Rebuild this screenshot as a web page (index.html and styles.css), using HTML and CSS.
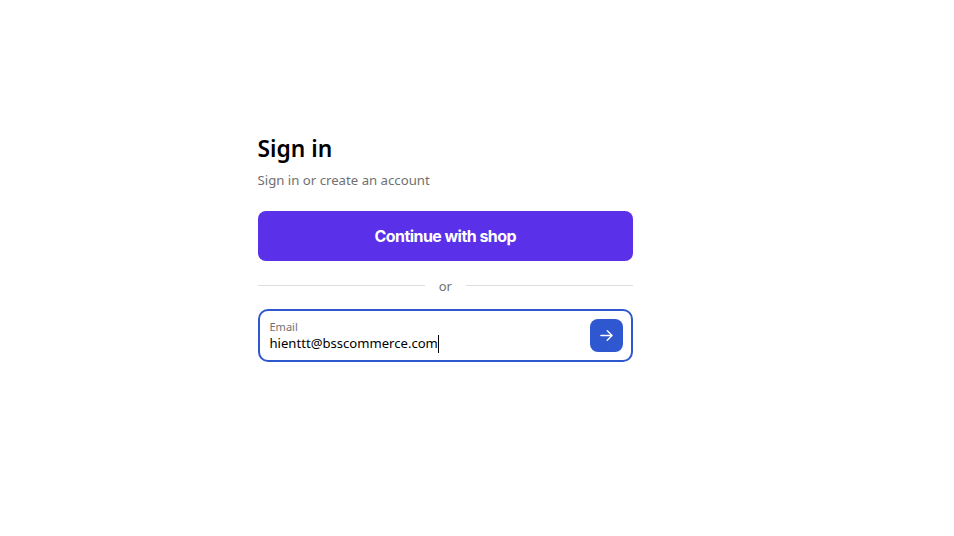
FILE: index.html
```html
<!DOCTYPE html>
<html lang="en">

<head>
    <meta charset="UTF-8">
    <meta name="viewport" content="width=device-width, initial-scale=1.0">
    <title>Sign in</title>
    <link rel="stylesheet" href="styles.css">
</head>

<body>
    <div class="container">
        <h1>Sign in</h1>
        <p class="subtitle">Sign in or create an account</p>
        <button class="shop-btn">Continue with shop</button>
        <div class="divider">
            <span class="line"></span>
            <span class="or">or</span>
            <span class="line"></span>
        </div>
        <div class="email-field">
            <div class="email-text">
                <label class="email-label">Email</label>
                <div class="email-value">hienttt@bsscommerce.com<span class="caret"></span></div>
            </div>
            <button class="submit-btn">
                <svg width="13" height="13" viewBox="0 0 14 14" fill="none" stroke="#fff" stroke-width="1.5" stroke-linecap="round" stroke-linejoin="round">
                    <path d="M1 7h12M7.800 1.800 13 7l-5.200 5.200"/>
                </svg>
            </button>
        </div>
    </div>
</body>

</html>
```

FILE: styles.css
```css
* {
    margin: 0;
    padding: 0;
    box-sizing: border-box;
    font-family: "Noto Sans", Arial, sans-serif;
}

body {
    background-color: #fff;
    height: 100vh;
    padding-left: 257.5px;
}

.container {
    width: 375.5px;
    padding-top: 132px;
}

h1 {
    font-size: 22.8px;
    line-height: 34px;
    font-weight: 600;
    color: #000;
}

.subtitle {
    margin-top: 4px;
    font-size: 13.2px;
    line-height: 20px;
    color: #707070;
}

.shop-btn {
    display: block;
    width: 100%;
    height: 50px;
    margin-top: 21px;
    background-color: #5a31e8;
    border: none;
    border-radius: 8px;
    color: #fff;
    font-family: Inter, sans-serif;
    font-size: 16px;
    font-weight: 700;
    letter-spacing: -0.55px;
}

.divider {
    display: flex;
    align-items: center;
    gap: 14px;
    height: 20px;
    margin-top: 15px;
}

.line {
    flex: 1;
    height: 1px;
    margin-bottom: 2px;
    background-color: #dedede;
}

.or {
    font-size: 13px;
    line-height: 20px;
    color: #707070;
}

.email-field {
    display: flex;
    align-items: center;
    justify-content: space-between;
    height: 53px;
    margin-top: 13px;
    padding: 0 8px 0 10px;
    border: 2px solid #2f57cf;
    border-radius: 10px;
}

.email-text {
    margin-top: 2px;
}

.email-label {
    display: block;
    font-size: 11px;
    line-height: 14px;
    color: #707070;
}

.email-value {
    display: flex;
    align-items: center;
    font-size: 13.1px;
    line-height: 19px;
    color: #000;
}

.caret {
    width: 1px;
    height: 18px;
    background-color: #000;
}

.submit-btn {
    display: flex;
    align-items: center;
    justify-content: center;
    width: 33px;
    height: 33px;
    background-color: #2f57cf;
    border: none;
    border-radius: 8px;
}
```
